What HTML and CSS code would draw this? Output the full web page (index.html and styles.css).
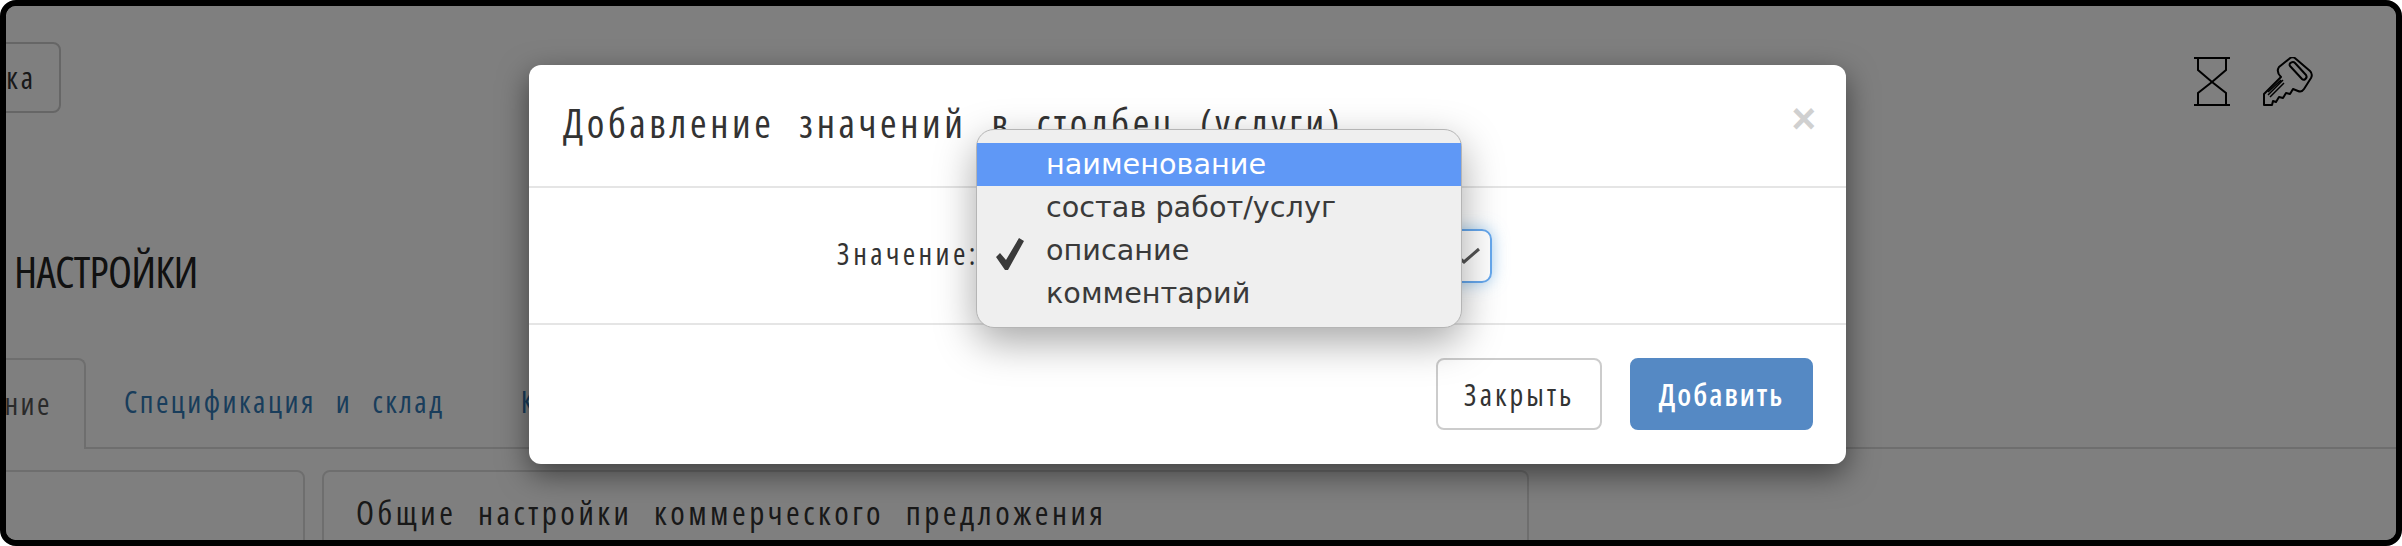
FILE: index.html
```html
<!DOCTYPE html>
<html lang="ru">
<head>
    <meta charset="UTF-8">
    <title>Настройки</title>
    <link rel="stylesheet" href="styles.css">
</head>
<body>
    <div class="screen">
        <div class="page">
            <div class="topbar">
                <button class="btn-top">Заявка</button>
                <div class="top-icons">
                    <svg class="icon-hourglass" viewBox="0 0 36 49" width="36" height="49" fill="none" stroke="#000" stroke-width="2">
                        <path d="M0 1H36M0 48H36"/>
                        <path d="M4 1V13L18 25L32 13V1"/>
                        <path d="M4 48V36L18 25L32 36V48"/>
                    </svg>
                    <svg class="icon-key" viewBox="0 0 50 50" width="50" height="50" fill="none" stroke="#000" stroke-width="2" stroke-linejoin="round">
                        <path d="M1 48V37L18 20C15 17 14 13 16 10L26 2C28 0 31 0 33 2L47 14C49 16 49 19 48 21L41 32C39 35 37 35 35 34L30 32L27 37L23 36L20 41L16 40L13 45L10 44L9 48Z"/>
                        <path d="M27 9L39 22C41 24 45 21 43 18L32 6C30 4 25 6 27 9Z"/>
                        <path d="M5 38L20 23M7 40L21 26M5 35L18 23" stroke-width="1.5"/>
                    </svg>
                </div>
            </div>
            <h1 class="page-title">НАСТРОЙКИ</h1>
            <ul class="tabs">
                <li class="tab active">Оформление</li>
                <li class="tab">Спецификация и склад</li>
                <li class="tab">Коммерческое предложение</li>
            </ul>
            <div class="panels">
                <div class="panel panel-side"></div>
                <div class="panel panel-main">Общие настройки коммерческого предложения</div>
            </div>
        </div>

        <div class="overlay"></div>

        <div class="modal">
            <div class="modal-header">
                <h4 class="modal-title">Добавление значений в столбец (услуги)</h4>
                <span class="modal-close">×</span>
            </div>
            <div class="modal-body">
                <label class="field-label">Значение:</label>
                <div class="select-box">
                    <svg class="select-check" viewBox="0 0 24 18" width="24" height="18" fill="none" stroke="#555" stroke-width="3"><path d="M1 10L7 15L22 2"/></svg>
                </div>
            </div>
            <div class="modal-footer">
                <button class="btn btn-default">Закрыть</button>
                <button class="btn btn-primary">Добавить</button>
            </div>

            <ul class="dropdown">
                <li class="option selected">наименование</li>
                <li class="option">состав работ/услуг</li>
                <li class="option checked">
                    <svg class="option-check" viewBox="0 0 28 32" width="28" height="32" fill="#3a3a3a"><path d="M0 19L4 15L10 22L23 0L28 3L12 32H9Z"/></svg>
                    описание
                </li>
                <li class="option">комментарий</li>
            </ul>
        </div>
    </div>
</body>
</html>
```

FILE: styles.css
```css
html, body {
    margin: 0;
    padding: 0;
    background-color: #fff;
}

.screen {
    position: relative;
    width: 2402px;
    height: 546px;
    box-sizing: border-box;
    border: 6px solid #000;
    border-radius: 16px;
    overflow: hidden;
    background-color: #fff;
    font-family: "Open Sans", "Liberation Sans", sans-serif;
    font-stretch: 75%;
    color: #333;
}

.page {
    margin-left: -200px;
    width: 2590px;
}

.topbar {
    display: flex;
    justify-content: space-between;
    align-items: flex-start;
    padding-top: 36px;
    height: 107px;
    box-sizing: border-box;
}

.btn-top {
    margin-left: 100px;
    width: 155px;
    height: 71px;
    padding: 0 23px 0 0;
    text-align: right;
    font: inherit;
    font-size: 30px;
    letter-spacing: 3px;
    color: #333;
    background: #fff;
    border: 2px solid #ccc;
    border-radius: 8px;
}

.top-icons {
    display: flex;
    gap: 33px;
    margin: 15px 83px 0 0;
}

.page-title {
    margin: 0;
    padding: 133px 0 0 208px;
    font-size: 44px;
    font-weight: normal;
    line-height: 50px;
    letter-spacing: -0.8px;
    color: #222;
}

.tabs {
    display: flex;
    list-style: none;
    margin: 62px 0 0;
    padding: 0;
    height: 89px;
    border-bottom: 2px solid #ddd;
}

.tab {
    padding: 0 38px;
    line-height: 88px;
    font-size: 30px;
    letter-spacing: 2.5px;
    word-spacing: 12px;
    color: #337ab7;
}

.tab.active {
    margin-left: 60px;
    width: 220px;
    box-sizing: border-box;
    padding: 0 32px 0 0;
    text-align: right;
    color: #555;
    background: #fff;
    border: 2px solid #ddd;
    border-bottom: none;
    border-radius: 8px 8px 0 0;
    height: 91px;
}

.panels {
    display: flex;
    gap: 17px;
    padding-top: 21px;
}

.panel {
    height: 200px;
    border: 2px solid #ddd;
    border-radius: 8px;
    box-sizing: border-box;
}

.panel-side {
    width: 499px;
}

.panel-main {
    width: 1207px;
    padding: 18px 32px;
    font-size: 33px;
    letter-spacing: 3.5px;
    word-spacing: 12px;
    color: #333;
}

.overlay {
    position: absolute;
    inset: 0;
    background: rgba(0, 0, 0, 0.5);
}

.modal {
    position: absolute;
    left: 523px;
    top: 59px;
    width: 1317px;
    height: 399px;
    display: flex;
    flex-direction: column;
    background: #fff;
    border-radius: 12px;
    box-shadow: 0 10px 30px rgba(0, 0, 0, 0.5);
}

.modal-header {
    height: 123px;
    box-sizing: border-box;
    display: flex;
    justify-content: space-between;
    padding: 33px 30px 0 34px;
    border-bottom: 2px solid #e5e5e5;
}

.modal-title {
    margin: 0;
    font-size: 40px;
    font-weight: normal;
    line-height: 50px;
    letter-spacing: 3.6px;
    word-spacing: 14px;
}

.modal-close {
    font-family: "Liberation Sans", sans-serif;
    font-stretch: normal;
    font-size: 42px;
    font-weight: bold;
    line-height: 42px;
    color: #d0d0d0;
}

.modal-body {
    height: 137px;
    box-sizing: border-box;
    display: flex;
    align-items: center;
    padding-left: 308px;
    border-bottom: 2px solid #e5e5e5;
}

.field-label {
    font-size: 30px;
    letter-spacing: 3.4px;
    width: 339px;
    padding-bottom: 4px;
}

.select-box {
    width: 316px;
    height: 54px;
    box-sizing: border-box;
    display: flex;
    align-items: center;
    justify-content: flex-end;
    padding-right: 9px;
    border: 2px solid #66a8ee;
    border-radius: 10px;
    box-shadow: 0 0 16px rgba(102, 175, 233, 0.6);
}

.modal-footer {
    flex: 1;
    display: flex;
    justify-content: flex-end;
    align-items: flex-start;
    gap: 28px;
    padding: 33px 33px 0 0;
}

.btn {
    height: 72px;
    font: inherit;
    font-size: 30px;
    letter-spacing: 3px;
    border-radius: 8px;
}

.btn-default {
    width: 166px;
    color: #333;
    background: #fff;
    border: 2px solid #ccc;
}

.btn-primary {
    width: 183px;
    font-weight: 600;
    letter-spacing: 2px;
    color: #fff;
    background: #5589c4;
    border: 2px solid #5589c4;
}

.dropdown {
    position: absolute;
    left: 447px;
    top: 64px;
    width: 486px;
    height: 199px;
    box-sizing: border-box;
    list-style: none;
    margin: 0;
    padding: 13px 0 0;
    background: #efefef;
    border: 1px solid #b5b5b5;
    border-radius: 18px;
    box-shadow: 0 14px 40px rgba(0, 0, 0, 0.35);
    font-family: "DejaVu Sans", sans-serif;
    font-stretch: normal;
    font-size: 28.7px;
    color: #3a3a3a;
}

.option {
    position: relative;
    height: 43px;
    line-height: 43px;
    padding-left: 69px;
}

.option.selected {
    color: #fff;
    background: #5f98f6;
}

.option-check {
    position: absolute;
    left: 19px;
    top: 9px;
}
```
